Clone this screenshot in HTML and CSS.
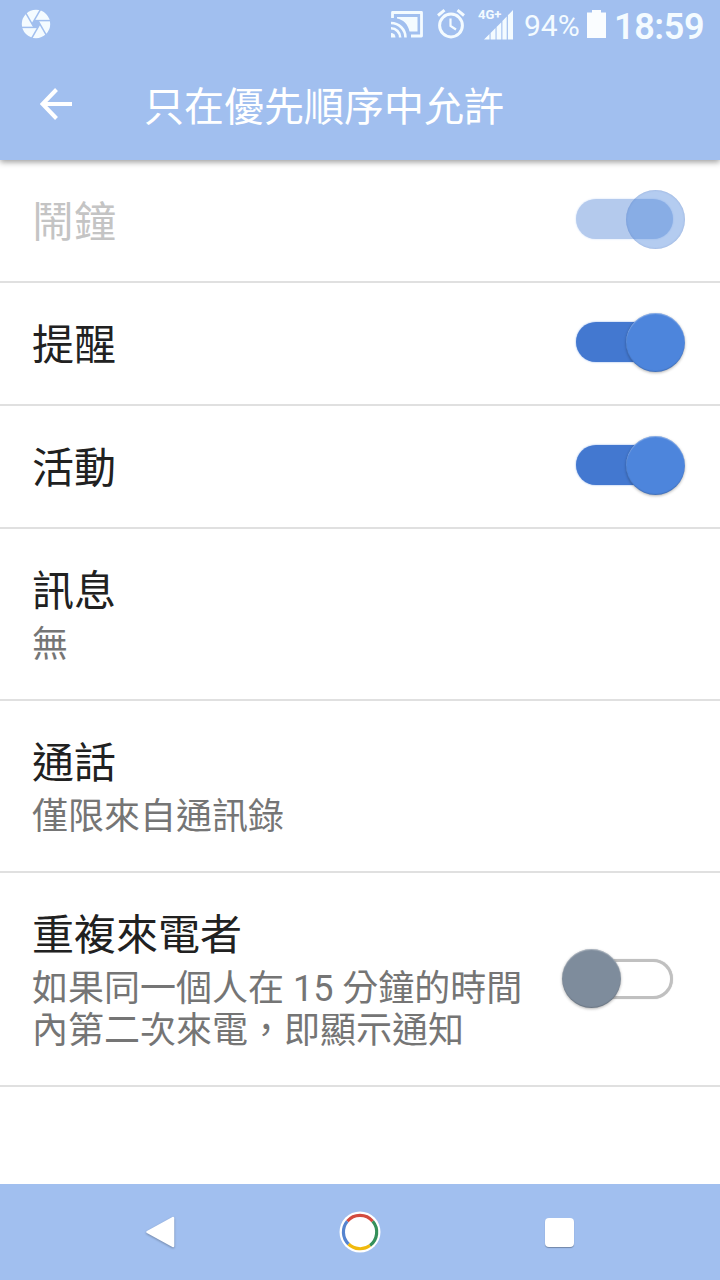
FILE: index.html
```html
<!DOCTYPE html>
<html lang="zh-Hant">
<head>
<meta charset="utf-8">
<title>只在優先順序中允許</title>
<link rel="stylesheet" href="styles.css">
</head>
<body>
<div class="screen">
  <header class="top">
    <div class="status">
      <svg class="shutter" width="30" height="30" viewBox="0 0 30 30">
        <circle cx="15" cy="15" r="14.2" fill="#f4fbff"/>
        <g stroke="#a1bfef" stroke-width="1.500">
          <path d="M13 11.600H30"/>
          <path d="M13 11.600H30" transform="rotate(60 15 15)"/>
          <path d="M13 11.600H30" transform="rotate(120 15 15)"/>
          <path d="M13 11.600H30" transform="rotate(180 15 15)"/>
          <path d="M13 11.600H30" transform="rotate(240 15 15)"/>
          <path d="M13 11.600H30" transform="rotate(300 15 15)"/>
        </g>
        <path d="M13 11.500H17L19 15L17 18.500H13L11 15Z" fill="#a1bfef"/>
      </svg>
      <div class="indicators">
        <svg class="cast" width="32" height="28" viewBox="0 0 32 28">
          <path d="M1.500 7V1.500H30.500V25H20" fill="none" stroke="#f4fbff" stroke-width="2.800" stroke-linejoin="round"/>
          <path d="M6 6H26.500V20.500H18.500C17 13 12 8.500 6 7.500Z" fill="#f4fbff"/>
          <path d="M0 22A4.500 4.500 0 0 1 4.500 26.500H0Z" fill="#f4fbff"/>
          <path d="M0 17.300A9.200 9.200 0 0 1 9.200 26.500M0 12A14.500 14.500 0 0 1 14.500 26.500" fill="none" stroke="#f4fbff" stroke-width="2.600"/>
        </svg>
        <svg class="alarm" width="28" height="30" viewBox="0 0 28 30">
          <g fill="none" stroke="#f4fbff">
            <circle cx="14" cy="16.500" r="11.400" stroke-width="3"/>
            <path d="M1 6.500L7.500 1.200M20.500 1.200L27 6.500" stroke-width="3"/>
            <path d="M13.500 9.500V17L19 20.500" stroke-width="2.200"/>
          </g>
        </svg>
        <div class="signal">
          <span class="network">4G+</span>
          <svg class="bars" width="30" height="30" viewBox="0 0 30 30">
            <path d="M0 29.500L5.500 24V29.500ZM6.600 23L11.500 18V29.500H6.600ZM12.600 17L17.300 12.300V29.500H12.600ZM18.400 11L22.700 6.500V29.500H18.400ZM23.900 5.300L29 0V29.500H23.900Z" fill="#f4fbff"/>
          </svg>
        </div>
        <span class="percent">94%</span>
        <svg class="battery" width="19" height="28" viewBox="0 0 19 28">
          <path d="M5 0H14V2.500H19V28H0V2.500H5Z" fill="#fafdff"/>
        </svg>
        <span class="clock">18:59</span>
      </div>
    </div>
    <div class="toolbar">
      <svg class="back" width="32" height="32" viewBox="0 0 32 32">
        <path d="M32 16H3M16.500 1.500L2.500 16L16.500 30.500" fill="none" stroke="#fff" stroke-width="4"/>
      </svg>
      <h1 class="title">只在優先順序中允許</h1>
    </div>
  </header>
  <main class="list">
    <div class="row disabled">
      <div class="label">鬧鐘</div>
      <div class="switch"><div class="track"></div><div class="knob"></div></div>
    </div>
    <div class="row">
      <div class="label">提醒</div>
      <div class="switch"><div class="track"></div><div class="knob"></div></div>
    </div>
    <div class="row">
      <div class="label">活動</div>
      <div class="switch"><div class="track"></div><div class="knob"></div></div>
    </div>
    <div class="row tall">
      <div><div class="label">訊息</div><div class="summary">無</div></div>
    </div>
    <div class="row tall">
      <div><div class="label">通話</div><div class="summary">僅限來自通訊錄</div></div>
    </div>
    <div class="row taller">
      <div><div class="label">重複來電者</div><div class="summary">如果同一個人在 15 分鐘的時間<br>內第二次來電，即顯示通知</div></div>
      <div class="switch off"><div class="track"></div><div class="knob"></div></div>
    </div>
  </main>
  <nav class="navbar">
    <svg class="nav-back" width="30" height="34" viewBox="0 0 30 34">
      <path d="M28 3V31L2.500 17Z" fill="#fff" stroke="#fff" stroke-width="2.500" stroke-linejoin="round"/>
    </svg>
    <svg class="nav-home" width="42" height="42" viewBox="0 0 42 42">
      <circle cx="21" cy="21" r="20.500" fill="#fff"/>
      <g fill="none" stroke-width="3.200">
        <path d="M8.300 10.300A16.700 16.700 0 0 1 33.700 10.300" stroke="#d34b3f"/>
        <path d="M33.700 10.300A16.700 16.700 0 0 1 31 34.500" stroke="#35905a"/>
        <path d="M31 34.500A16.700 16.700 0 0 1 9.500 33" stroke="#f0b90d"/>
        <path d="M9.500 33A16.700 16.700 0 0 1 8.300 10.300" stroke="#5584cf"/>
      </g>
    </svg>
    <div class="nav-recent"></div>
  </nav>
</div>
</body>
</html>
```
FILE: styles.css
```css
body {
  margin: 0;
  font-family: Roboto, "Noto Sans CJK TC", sans-serif;
}
.screen {
  width: 720px;
  height: 1280px;
  display: flex;
  flex-direction: column;
  background: #fff;
  overflow: hidden;
}
.top {
  height: 160px;
  flex: none;
  background: #a1bfef;
  box-shadow: 0 2px 6px rgba(0, 0, 0, .4);
  z-index: 1;
}
.status {
  height: 48px;
  display: flex;
  justify-content: space-between;
  align-items: flex-start;
  padding: 0 16px 0 21px;
  color: #f4fbff;
}
.shutter { margin-top: 9px; }
.indicators {
  display: flex;
  align-items: flex-start;
}
.cast { margin: 11px 14px 0 0; }
.alarm { margin: 9px 12px 0 0; }
.signal {
  position: relative;
  width: 38px;
  height: 48px;
  margin-right: 9px;
}
.network {
  position: absolute;
  left: 1px;
  top: 7px;
  font-size: 13px;
  line-height: 15px;
  font-weight: 700;
}
.bars {
  position: absolute;
  left: 7px;
  top: 10px;
}
.percent {
  font-size: 30px;
  line-height: 51px;
  width: 56px;
  margin-right: 7px;
  white-space: nowrap;
  letter-spacing: 0;
}
.battery { margin: 10px 8px 0 0; }
.clock {
  font-size: 36px;
  line-height: 54px;
  font-weight: 600;
  width: 90px;
  white-space: nowrap;
  letter-spacing: -.4px;
}
.toolbar {
  height: 112px;
  display: flex;
  align-items: center;
  padding-left: 40px;
}
.title {
  margin: 7px 0 0 72px;
  font-size: 40px;
  line-height: 60px;
  font-weight: 400;
  color: #fff;
}
.row {
  height: 123px;
  box-sizing: border-box;
  border-bottom: 2px solid #e0e0e0;
  padding: 0 32px;
  display: flex;
  align-items: center;
  justify-content: space-between;
}
.tall { height: 172px; }
.taller { height: 214px; }
.label {
  font-size: 42px;
  line-height: 60px;
  color: #212121;
}
.row > .label { padding-top: 4px; }
.summary {
  font-size: 36px;
  line-height: 42px;
  padding-top: 2px;
  color: #757575;
}
.switch {
  position: relative;
  width: 97px;
  height: 40px;
  margin: 0 15px 3px 0;
  flex: none;
}
.track {
  height: 40px;
  box-sizing: border-box;
  border-radius: 20px;
  background: #4378d0;
  box-shadow: 0 0 2px #7fa5e4;
}
.knob {
  position: absolute;
  left: 50px;
  top: -9px;
  width: 59px;
  height: 59px;
  border-radius: 50%;
  background: #4d85dc;
  box-shadow: 0 1px 3px rgba(0, 0, 0, .3), inset 0 1px 1px rgba(255, 255, 255, .35), inset 0 -1px 1px rgba(0, 0, 0, .15);
}
.disabled .label { color: #c4c4c4; }
.disabled .track {
  background: #b4caed;
  box-shadow: 0 0 2px #c4d7f5;
}
.disabled .knob {
  background: rgba(77, 133, 220, .42);
  box-shadow: inset 0 0 2px rgba(60, 90, 160, .3);
}
.off { margin-bottom: 0; }
.off .track {
  background: #fff;
  border: 3px solid #c0c0c0;
  box-shadow: 0 0 1px #c0c0c0;
}
.off .knob {
  left: -14px;
  top: -10px;
  background: #7e8c9c;
}
.navbar {
  margin-top: auto;
  height: 96px;
  background: #a1bfef;
  display: flex;
  align-items: center;
  padding-left: 145px;
}
.nav-back {
  margin-right: 164px;
  filter: drop-shadow(0 1px 1px rgba(0, 0, 0, .3));
}
.nav-home { margin-right: 164px; }
.nav-recent {
  width: 29px;
  height: 29px;
  border-radius: 4px;
  background: #fff;
  box-shadow: 0 1px 1px rgba(0, 0, 0, .3);
}
```
